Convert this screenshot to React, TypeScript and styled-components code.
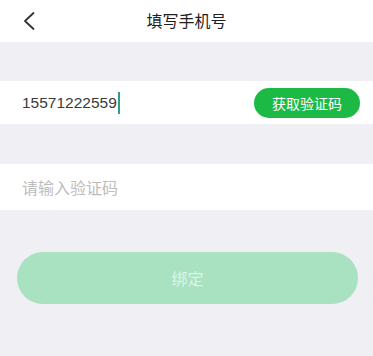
import React from "react";
import styled, { createGlobalStyle } from "styled-components";

const GlobalStyle = createGlobalStyle`
  html, body {
    margin: 0;
    padding: 0;
    background: #efeff4;
  }
  body {
    font-family: "Noto Sans CJK SC", "Liberation Sans", sans-serif;
  }
`;

const Page = styled.div`
  width: 373px;
  height: 356px;
  background: #efeff4;
  overflow: hidden;
`;

const Header = styled.div`
  position: relative;
  height: 42px;
  background: #ffffff;
  display: flex;
  align-items: center;
  justify-content: center;
`;

const BackButton = styled.div`
  position: absolute;
  left: 20px;
  top: 11px;
  width: 18px;
  height: 20px;
  display: flex;
  align-items: center;
  justify-content: center;
`;

const Title = styled.div`
  font-size: 16px;
  color: #1f1f1f;
  line-height: 1;
  margin-top: -2px;
`;

const Row = styled.div<{ $height: number; $top: number }>`
  margin-top: ${(p) => p.$top}px;
  height: ${(p) => p.$height}px;
  background: #ffffff;
  display: flex;
  align-items: center;
  padding: 0 13px 0 22px;
`;

const PhoneText = styled.div`
  font-family: "Liberation Sans", sans-serif;
  font-size: 15.5px;
  color: #3a3a3a;
  display: flex;
  align-items: center;
`;

const Caret = styled.span`
  display: inline-block;
  width: 2px;
  height: 22px;
  background: #2e9e8a;
  margin-left: 1px;
`;

const Spacer = styled.div`
  flex: 1;
`;

const CodeButton = styled.button`
  width: 106px;
  height: 30px;
  border: none;
  border-radius: 15px;
  background: #1cba45;
  color: #ffffff;
  font-family: "Noto Sans CJK SC", sans-serif;
  font-size: 14px;
  padding: 0;
  margin-top: 1px;
`;

const Placeholder = styled.div`
  font-size: 16px;
  color: #bdbdbd;
`;

const BindButton = styled.button`
  display: block;
  margin: 42px 0 0 17px;
  width: 341px;
  height: 52px;
  border: none;
  border-radius: 26px;
  background: #a8e2c0;
  color: #def4e7;
  font-family: "Noto Sans CJK SC", sans-serif;
  font-size: 16px;
  padding: 0;
`;

export default function App() {
  return (
    <Page>
      <GlobalStyle />
      <Header>
        <BackButton>
          <svg width="14" height="20" viewBox="0 0 14 20">
            <path d="M11.5 2 L3 10 L11.5 18" fill="none" stroke="#333" strokeWidth="1.8" strokeLinecap="round" strokeLinejoin="round" />
          </svg>
        </BackButton>
        <Title>填写手机号</Title>
      </Header>
      <Row $height={43} $top={39}>
        <PhoneText>
          15571222559
          <Caret />
        </PhoneText>
        <Spacer />
        <CodeButton>获取验证码</CodeButton>
      </Row>
      <Row $height={46} $top={40}>
        <Placeholder>请输入验证码</Placeholder>
      </Row>
      <BindButton>绑定</BindButton>
    </Page>
  );
}
